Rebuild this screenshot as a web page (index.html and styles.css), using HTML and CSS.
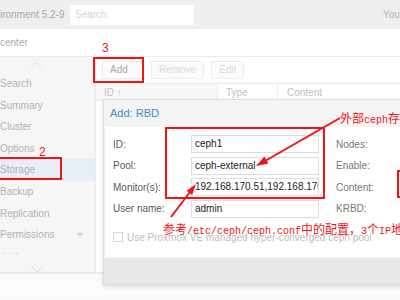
FILE: index.html
```html
<!DOCTYPE html>
<html>
<head>
<meta charset="utf-8">
<link rel="stylesheet" href="styles.css">
</head>
<body>
<div class="page">
  <header class="topbar">
    <span class="brand">ironment 5.2-9</span>
    <div class="search">Search</div>
    <span class="user">You are logged in</span>
  </header>
  <div class="crumb">center</div>
  <div class="main">
    <nav class="side">
      <div class="chev"><svg width="14" height="8" viewBox="0 0 14 8"><path d="M1 7 L7 1 L13 7" fill="none" stroke="#e2e2e2" stroke-width="1"/></svg></div>
      <div class="item">Search</div>
      <div class="item">Summary</div>
      <div class="item">Cluster</div>
      <div class="item">Options</div>
      <div class="item sel">Storage</div>
      <div class="item">Backup</div>
      <div class="item">Replication</div>
      <div class="item perm"><span>Permissions</span><span class="caret"></span></div>
      <div class="item dots">· · ·</div>
      <div class="chev down"><svg width="14" height="8" viewBox="0 0 14 8"><path d="M1 1 L7 7 L13 1" fill="none" stroke="#e2e2e2" stroke-width="1"/></svg></div>
    </nav>
    <section class="content">
      <div class="toolbar">
        <div class="btn add">Add <span class="dd">⌄</span></div>
        <div class="btn dis rem">Remove</div>
        <div class="btn dis">Edit</div>
      </div>
      <div class="grid-head">
        <div class="col c1">ID ↑</div>
        <div class="col c2">Type</div>
        <div class="col c3">Content</div>
      </div>
      <div class="grid-body"></div>
    </section>
  </div>
  <div class="foot-band"></div>

  <div class="dialog">
    <div class="dlg-title">Add: RBD</div>
    <div class="dlg-body">
      <div class="form">
        <div class="fcol">
          <div class="row"><label>ID:</label><div class="inp">ceph1</div></div>
          <div class="row"><label>Pool:</label><div class="inp">ceph-external</div></div>
          <div class="row"><label>Monitor(s):</label><div class="inp">192.168.170.51,192.168.170.52</div></div>
          <div class="row"><label>User name:</label><div class="inp">admin</div></div>
        </div>
        <div class="fcol right">
          <div class="row"><label>Nodes:</label></div>
          <div class="row"><label>Enable:</label></div>
          <div class="row"><label>Content:</label></div>
          <div class="row"><label>KRBD:</label></div>
        </div>
      </div>
      <div class="check"><span class="box"></span><span>Use Proxmox VE managed hyper-converged ceph pool</span></div>
    </div>
    <div class="dlg-foot"></div>
  </div>

  <svg class="annot" width="400" height="300" viewBox="0 0 400 300">
    <g fill="none" stroke="#f01414" stroke-width="2">
      <rect x="-2" y="158" width="63" height="21"/>
      <rect x="94" y="58" width="49" height="24"/>
      <rect x="166" y="128" width="158" height="70"/>
      <rect x="398" y="171" width="20" height="26"/>
      <line x1="340" y1="118" x2="265" y2="161"/>
      <line x1="171" y1="217" x2="190" y2="192"/>
    </g>
    <g fill="#f01414">
      <polygon points="256,166 268.4,163.5 264.4,156.6"/>
      <polygon points="196,184 192.2,194.9 186.6,190.7"/>
    </g>
  </svg>
  <span class="note n3">3</span>
  <span class="note n2">2</span>
  <span class="note n-ext">外部<span class="lat">ceph</span>存储</span>
  <span class="note n-ref">参考<span class="lat">/etc/ceph/ceph.conf</span>中的配置，<span class="lat">3</span>个<span class="lat">IP</span>地址</span>
</div>
</body>
</html>
```

FILE: styles.css
```css
* { box-sizing: border-box; }
html, body { margin: 0; padding: 0; }
body {
  width: 400px;
  height: 300px;
  overflow: hidden;
  background: #fafafa;
  font-family: "Liberation Sans", Arial, sans-serif;
  font-size: 10px;
}
.page { position: relative; width: 400px; height: 300px; overflow: hidden; }

.topbar {
  height: 29px;
  background: #efefef;
  display: flex;
  align-items: center;
  white-space: nowrap;
}
.topbar > * { flex-shrink: 0; }
.brand { color: #a8a8a8; font-size: 10px; width: 70px; }
.search {
  width: 124px;
  height: 20px;
  background: #fff;
  color: #d4d4d4;
  font-size: 10px;
  padding-left: 5px;
  line-height: 20px;
}
.user { color: #b4b4b4; margin-left: 189px; }

.crumb {
  height: 28px;
  background: #fff;
  border-bottom: 1px solid #ececec;
  color: #aaa;
  line-height: 28px;
  font-size: 10px;
}

.main { display: flex; height: 217px; border-bottom: 2px solid #ececec; }
.side {
  width: 96px;
  flex-shrink: 0;
  background: #f6f6f6;
  border-right: 1px solid #e9e9e9;
  display: flex;
  flex-direction: column;
}
.chev { height: 16px; flex-shrink: 0; display: flex; justify-content: center; align-items: center; padding-right: 22px; }
.chev.down { height: 18px; margin-top: auto; }
.item {
  height: 21.6px;
  flex-shrink: 0;
  line-height: 21.6px;
  color: #b2b2b2;
  font-size: 10px;
  white-space: nowrap;
}
.item.sel { background: #e8eef5; }
.perm { display: flex; align-items: center; }
.caret {
  margin-left: 22px;
  width: 0; height: 0;
  border-left: 4px solid transparent;
  border-right: 4px solid transparent;
  border-top: 4px solid #d8d8d8;
}
.dots { color: #ccc; height: 14px; line-height: 16px; padding-left: 3px; overflow: hidden; }

.content { flex: 1; background: #fff; display: flex; flex-direction: column; }
.toolbar {
  height: 26px;
  display: flex;
  align-items: flex-start;
  gap: 7px;
  padding: 4px 0 0 6px;
}
.btn {
  height: 18px;
  line-height: 16px;
  border: 1px solid #ececec;
  background: #fbfbfb;
  border-radius: 2px;
  color: #aaa;
  font-size: 10px;
  padding: 0 7px;
}
.btn.add { width: 41px; padding-left: 7px; }
.dd { color: #c8c8c8; font-size: 9px; margin-left: 2px; }
.btn.dis { color: #dadada; }
.btn.rem { margin-left: 1px; }

.grid-head {
  height: 18px;
  display: flex;
  border-top: 1px solid #ececec;
  border-bottom: 1px solid #ececec;
  color: #c0c0c0;
  font-size: 10px;
  line-height: 17px;
}
.col { padding-left: 8px; border-right: 1px solid #ececec; }
.c1 { width: 122px; background: #f7f8fa; }
.c2 { width: 60px; }
.c3 { flex: 1; border-right: none; padding-left: 9px; }
.grid-body { flex: 1; }

.foot-band { height: 25px; background: #fbfbfb; }

.dialog {
  position: absolute;
  left: 103px;
  top: 99px;
  width: 320px;
  height: 186px;
  background: #f4f4f4;
  border: 1px solid #dcdcdc;
  box-shadow: 0 2px 4px rgba(0,0,0,0.12);
  display: flex;
  flex-direction: column;
}
.dlg-title {
  height: 27px;
  line-height: 27px;
  padding-left: 6px;
  color: #3d8cd0;
  font-size: 11px;
}
.dlg-body {
  background: #fff;
  margin: 0 2px;
  height: 130px;
  padding: 8px 0 0 7px;
}
.form { display: flex; }
.fcol { display: flex; flex-direction: column; gap: 3.5px; width: 223px; }
.fcol.right { width: auto; }
.row { height: 18px; display: flex; align-items: center; }
.row label { width: 78px; color: #5a5a5a; font-size: 10px; }
.fcol.right .row label { color: #777; }
.inp {
  width: 128px;
  height: 18px;
  border: 1px solid #dcdcdc;
  color: #222;
  font-size: 10px;
  line-height: 16px;
  padding-left: 3px;
  white-space: nowrap;
  overflow: hidden;
}
.check {
  margin-top: 14px;
  display: flex;
  align-items: center;
  gap: 4px;
  color: #bdbdbd;
  font-size: 10px;
  white-space: nowrap;
}
.box { width: 10px; height: 10px; border: 1px solid #d8d8d8; background: #fff; }
.dlg-foot { height: 26px; background: #e8e8e8; margin-top: auto; }

.annot { position: absolute; left: 0; top: 0; pointer-events: none; }
.note {
  position: absolute;
  color: #f01414;
  font-family: "Noto Sans CJK SC", sans-serif;
  font-size: 12px;
  line-height: 14px;
  white-space: nowrap;
}
.note .lat { font-family: "Liberation Mono", monospace; font-size: 10px; }
.n3 { left: 102px; top: 41px; font-family: "Liberation Sans", sans-serif; }
.n2 { left: 39px; top: 145px; font-family: "Liberation Sans", sans-serif; }
.n-ext { left: 340px; top: 111px; }
.n-ref { left: 163px; top: 222px; }
```
